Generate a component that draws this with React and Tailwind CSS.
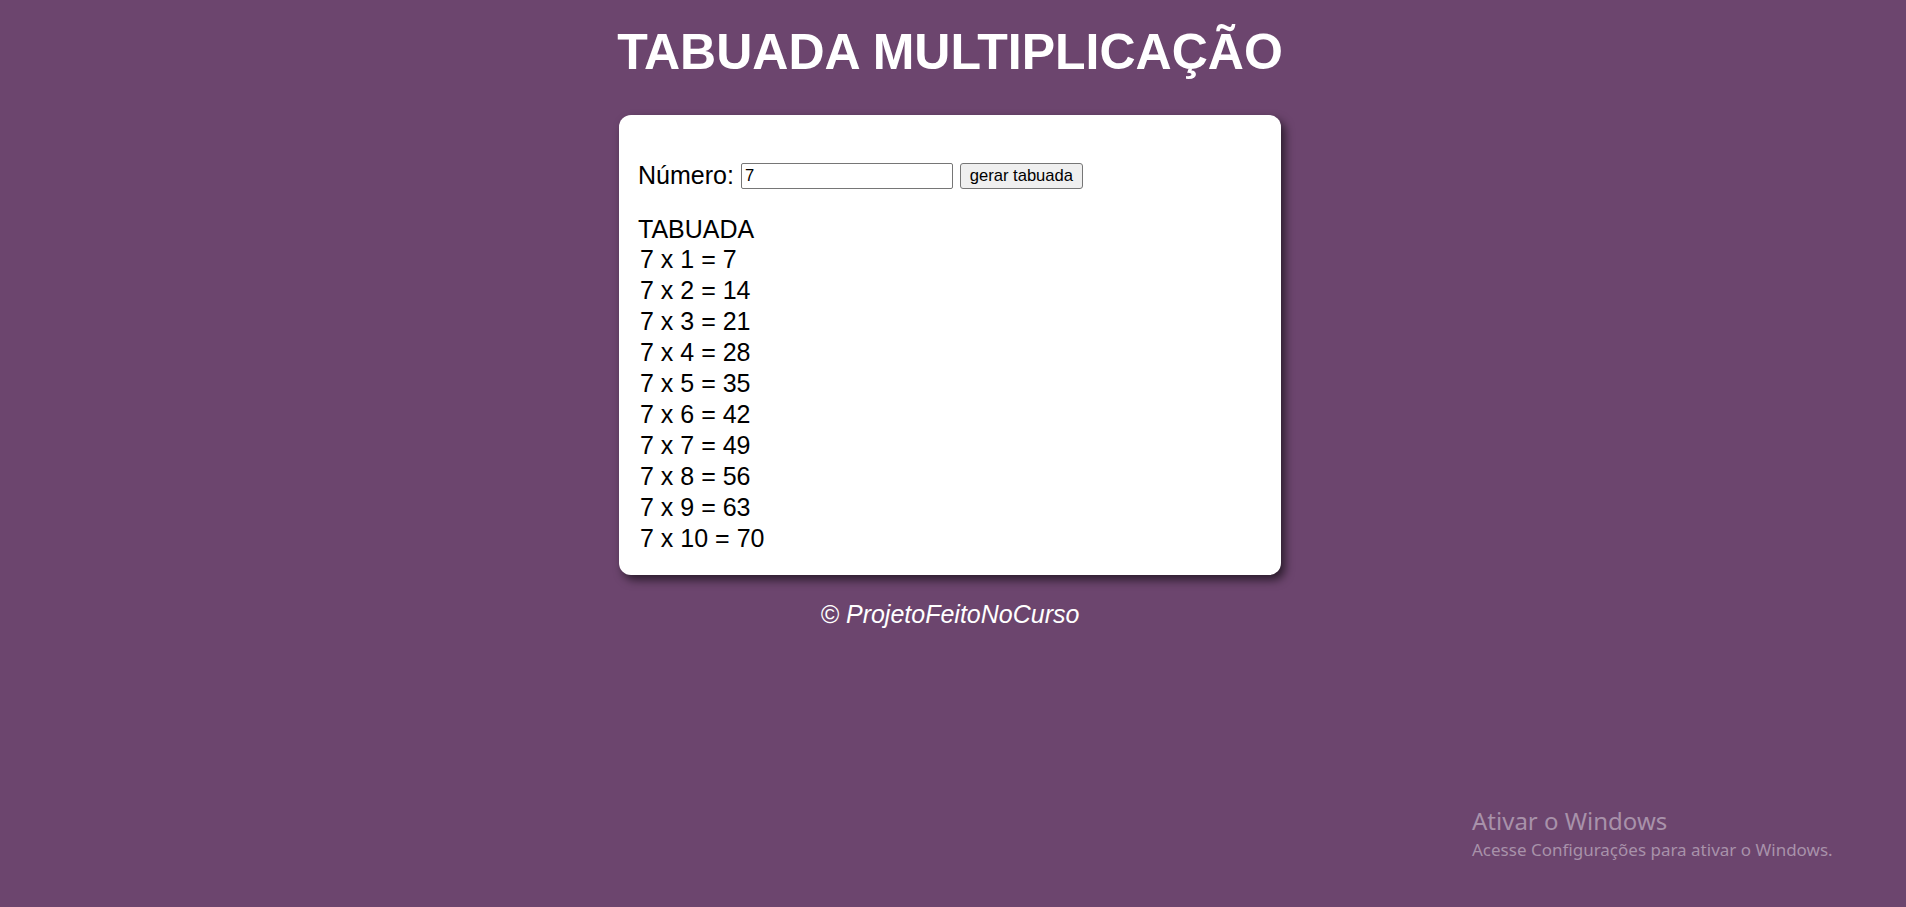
export default function App() {
  const n = 7;
  const rows = Array.from({ length: 10 }, (_, i) => i + 1);
  return (
    <div
      className="relative min-h-screen w-full bg-[#6c456e] flex flex-col items-center pr-[6px] overflow-hidden"
      style={{ fontFamily: '"Liberation Sans", Arial, sans-serif' }}
    >
      <h1 className="mt-[24px] text-[50px] leading-[56px] font-bold text-white">
        TABUADA MULTIPLICAÇÃO
      </h1>
      <div className="mt-[35px] w-[662px] bg-white rounded-[12px] shadow-[4px_5px_10px_rgba(0,0,0,0.6)] px-[19px] pt-[46px] pb-[21px] text-black">
        <div className="flex items-center h-[29px] text-[25px] leading-[29px]">
          <span>Número:</span>
          <div className="ml-[7px] w-[212px] h-[26px] border border-[#767676] rounded-[2px] bg-white flex items-center pl-[3px] text-[16.6px]">
            7
          </div>
          <div className="ml-[7px] w-[123px] h-[26px] border border-[#767676] rounded-[3px] bg-[#efefef] flex items-center justify-center text-[16.6px]">
            gerar tabuada
          </div>
        </div>
        <div className="mt-[25px] h-[29px] text-[25px] leading-[29px]">TABUADA</div>
        <div className="pl-[2px]">
          {rows.map((i) => (
            <div key={i} className="h-[31px] text-[25px] leading-[31px]">
              {n} x {i} = {n * i}
            </div>
          ))}
        </div>
      </div>
      <p className="mt-[25px] text-[25px] leading-[29px] italic text-white">
        © ProjetoFeitoNoCurso
      </p>
      <div
        className="absolute left-[1472px] top-[805px] text-[#a892aa]"
        style={{ fontFamily: '"Noto Sans", "Open Sans", sans-serif' }}
      >
        <div className="text-[24px] leading-[31px]">Ativar o Windows</div>
        <div className="text-[17px] leading-[22px] mt-[3px]">
          Acesse Configurações para ativar o Windows.
        </div>
      </div>
    </div>
  );
}
